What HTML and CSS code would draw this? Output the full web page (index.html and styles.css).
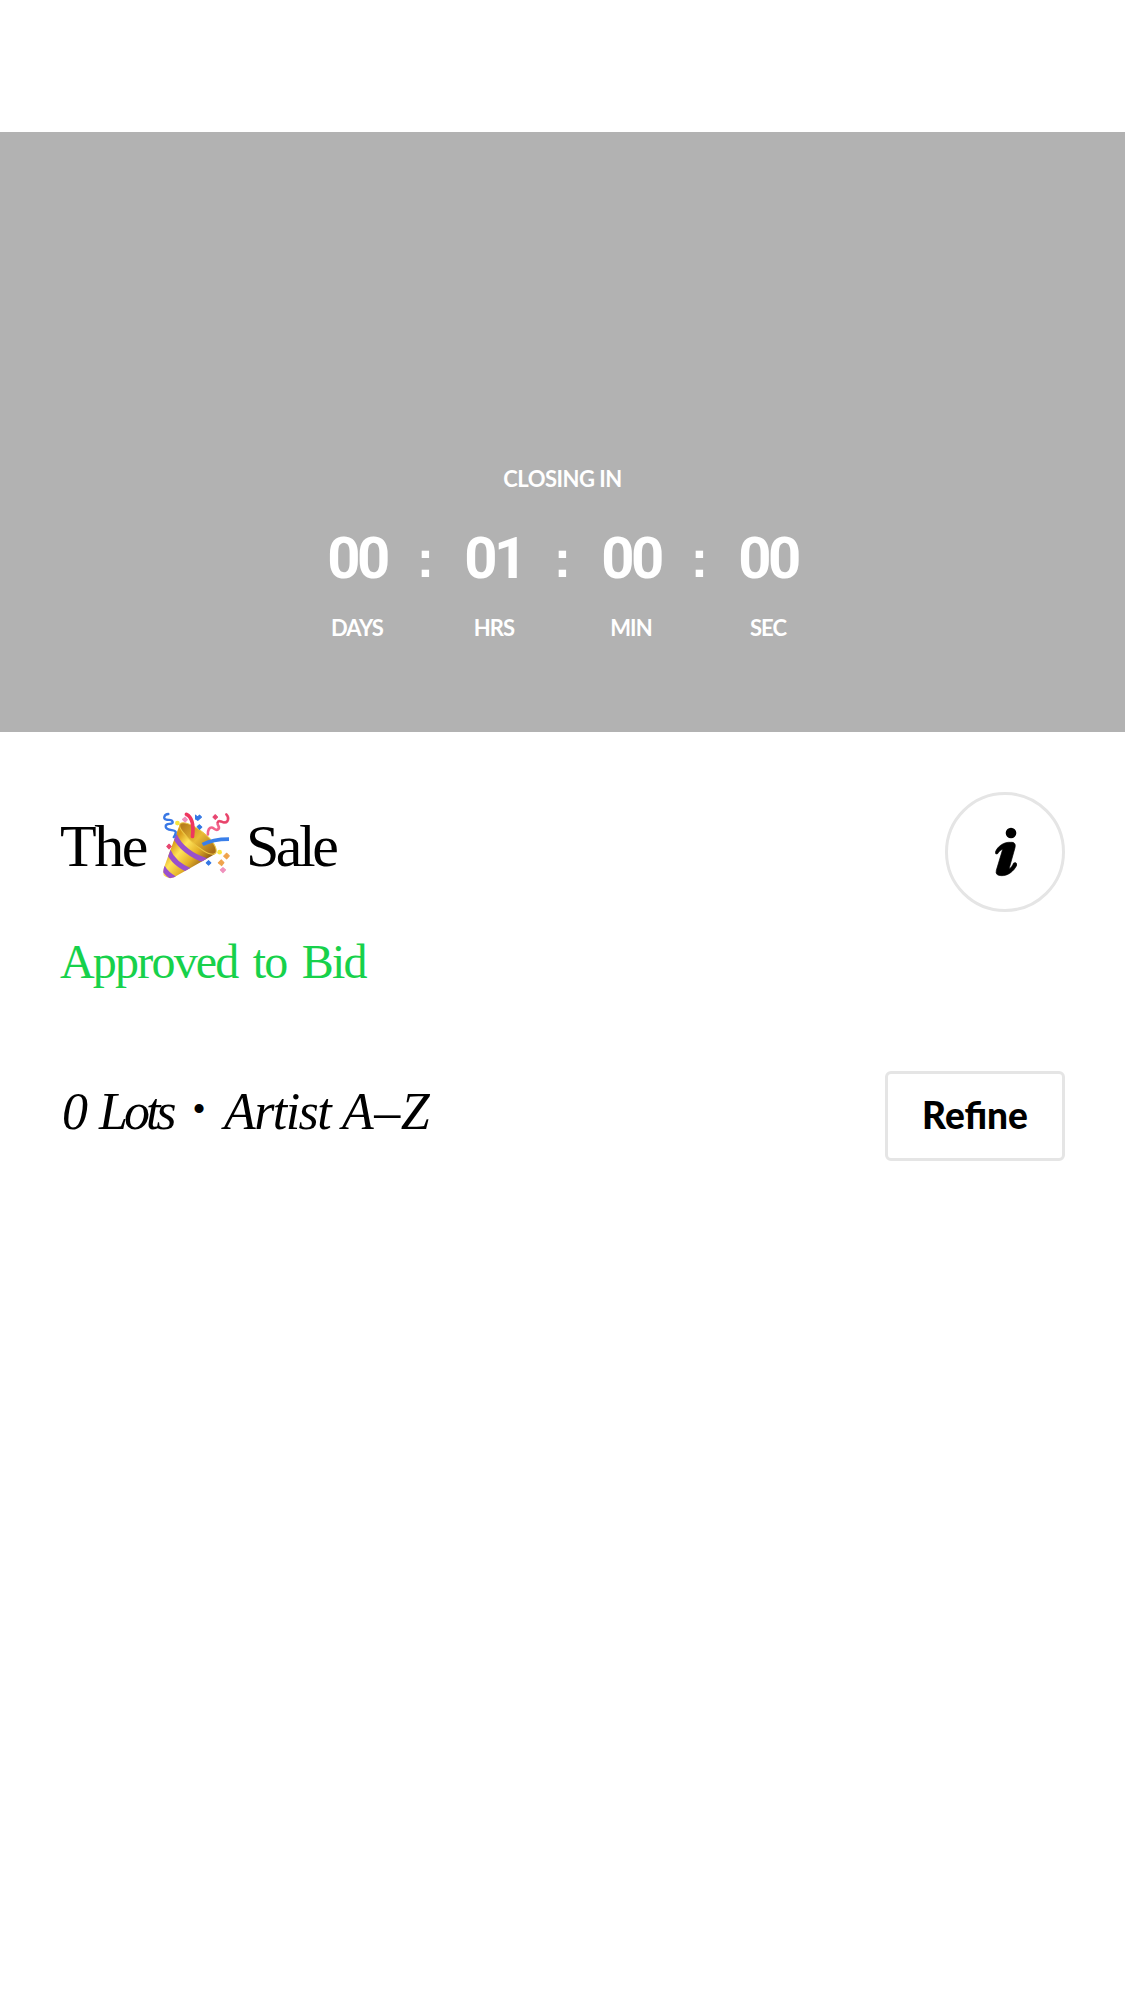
FILE: index.html
```html
<!DOCTYPE html>
<html lang="en">
<head>
<meta charset="utf-8">
<title>The Sale</title>
<link rel="stylesheet" href="styles.css">
</head>
<body>
<header class="hero">
  <div class="closing">CLOSING IN</div>
  <div class="countdown">
    <div class="unit"><span class="num">00</span><span class="label">DAYS</span></div>
    <span class="colon">:</span>
    <div class="unit"><span class="num">01</span><span class="label">HRS</span></div>
    <span class="colon">:</span>
    <div class="unit"><span class="num">00</span><span class="label">MIN</span></div>
    <span class="colon">:</span>
    <div class="unit"><span class="num">00</span><span class="label">SEC</span></div>
  </div>
</header>
<main class="content">
  <div class="title-row">
    <h1 class="title">
      <span class="the">The</span>
      <svg class="party" viewBox="36 33 206 206" fill="none" stroke-linecap="round" aria-label="Party popper">
        <defs>
          <linearGradient id="gold" x1="62" y1="135" x2="150" y2="205" gradientUnits="userSpaceOnUse">
            <stop offset="0" stop-color="#d99a18"/><stop offset=".3" stop-color="#ffe45a"/><stop offset=".65" stop-color="#e5b127"/><stop offset="1" stop-color="#966018"/>
          </linearGradient>
          <linearGradient id="mouth" x1="100" y1="75" x2="185" y2="155" gradientUnits="userSpaceOnUse">
            <stop offset="0" stop-color="#b97f1c"/><stop offset=".5" stop-color="#e9bb35"/><stop offset="1" stop-color="#a96f18"/>
          </linearGradient>
          <clipPath id="cone"><path d="M89 73C106 102 148 143 193 162L72 231Q54 238 41 225Q38 215 42 202Z"/></clipPath>
        </defs>
        <path d="M89 73C106 102 148 143 193 162L72 231Q54 238 41 225Q38 215 42 202Z" fill="url(#gold)"/>
        <g clip-path="url(#cone)" stroke="#9950cc" stroke-width="15" stroke-linecap="butt">
          <path d="M74 106C88 139 124 168 168 181M54 151C65 178 91 200 124 213M38 201C46 216 58 226 75 236"/>
        </g>
        <path d="M90 71C99 62 130 74 161 99C187 119 202 145 197 158C184 173 141 142 116 116C99 98 84 82 90 71Z" fill="url(#mouth)" stroke="#edc743" stroke-width="3"/>
        <path d="M109 43C128 52 131 75 127 109" stroke="#ef365f" stroke-width="11"/>
        <path d="M157 133C181 120 207 117 236 117" stroke="#3a7fe9" stroke-width="11" stroke-linecap="butt"/>
        <path d="M55 42C42 43 38 57 49 59C56 61 66 56 68 66C69 75 45 68 47 80C49 94 80 87 77 98Q76 105 71 111" stroke="#3978e5" stroke-width="7"/>
        <path d="M228 43C239 54 232 69 221 67C212 65 204 59 202 68C200 77 212 81 203 88C194 95 187 73 176 87Q172 94 173 103" stroke="#f2648b" stroke-width="8"/>
        <path d="M228 43C239 54 232 69 221 67C212 65 206 59 202 67" stroke="#e64468" stroke-width="5"/>
        <circle cx="82" cy="69" r="7" fill="#f8e640"/><circle cx="208" cy="156" r="7" fill="#f8e640"/>
        <g stroke-width="3" stroke-linejoin="round">
          <path d="M136 45l6 6 6-6 6 6-5 5-6 5-7-4z" fill="#3478e5" stroke="#3478e5"/>
          <path d="M141 80l7-6 7 7-7 7zM168 188l7-7 7 7-7 7z" fill="#3478e5" stroke="#3478e5"/>
          <path d="M50 139l7-7 7 7-7 7zM188 51l7-7 7 7-7 7z" fill="#e74570" stroke="#e74570"/>
          <path d="M97 58l8-7 7 8-7 7zM210 209l8-7 8 7-8 8z" fill="#ef91bd" stroke="#ef91bd"/>
          <path d="M204 188l9-9 8 8-7 9zM220 168l9-9 8 8-8 9z" fill="#efa34c" stroke="#efa34c"/>
        </g>
      </svg>
      <span class="sale">Sale</span>
    </h1>
    <button class="info" aria-label="Information">
      <svg class="info-icon" viewBox="0 0 66 150" fill="#000">
        <circle cx="48" cy="18" r="16"/>
        <path d="M1 76C7 58 27 44 47 46C58 45 63 51 60 62L42 126C48 124 53 114 56 108Q64 104 66 113C57 133 38 147 19 146Q0 146 4 130L23 67C16 68 11 76 8 80Q1 84 1 76Z" stroke="#000" stroke-width="2"/>
      </svg>
    </button>
  </div>
  <div class="status">Approved to Bid</div>
  <div class="filter-row">
    <div class="summary"><span class="count">0</span><span class="lots">Lots</span><span class="dot">•</span><span class="artist">Artist</span><span class="range">A–Z</span></div>
    <button class="refine">Refine</button>
  </div>
</main>
</body>
</html>
```
FILE: styles.css
```css
* { box-sizing: border-box; }
body { margin: 0; padding-top: 132px; background: #fff; color: #000; }
button { padding: 0; background: #fff; border: 3px solid #e5e5e5; color: #000; }

.hero { height: 600px; padding-top: 332px; background: #b2b2b2; color: #fff; }
.closing, .label { font: 700 22px/30px Lato, sans-serif; text-align: center; letter-spacing: -0.5px; white-space: nowrap; }
.countdown { display: flex; justify-content: center; margin-top: 34px; }
.unit { width: 78px; display: flex; flex-direction: column; align-items: center; }
.num { font: 700 58px/60px Roboto, sans-serif; letter-spacing: -3.5px; margin-right: 0; }
.label { margin-top: 25px; letter-spacing: -0.9px; }
.colon { width: 59px; text-align: center; font: 700 52px/62px "Liberation Sans", sans-serif; }

.content { padding: 60px 60px 0; }
.title-row { display: flex; justify-content: space-between; height: 120px; }
.title { display: flex; margin: 0; font: 400 60px/68px "Liberation Serif", serif; padding-top: 20px; }
.the { width: 102px; letter-spacing: -2.5px; }
.party { width: 69px; height: 69px; margin-top: -1px; }
.sale { margin-left: 15px; letter-spacing: -3.5px; }
.info { width: 120px; height: 120px; border-radius: 50%; display: flex; justify-content: center; align-items: center; }
.info-icon { width: 22px; height: 50px; margin-left: 1px; }
.status { margin-top: 22px; font: 400 48px/56px "Liberation Serif", serif; letter-spacing: -1.8px; word-spacing: 5px; color: #17d14b; }
.filter-row { display: flex; justify-content: space-between; margin-top: 81px; }
.summary { display: flex; padding-top: 13px; font: italic 400 52px/56px "Liberation Serif", serif; }
.count { width: 39px; padding-left: 2px; }
.lots { width: 93px; letter-spacing: -4px; }
.dot { width: 32px; font-size: 38px; line-height: 51px; }
.artist { width: 118px; letter-spacing: -1.6px; }
.range { letter-spacing: 0.5px; }
.refine { width: 180px; height: 90px; border-radius: 6px; font: 900 37px/82px Lato, sans-serif; padding-bottom: 2px; }
```
